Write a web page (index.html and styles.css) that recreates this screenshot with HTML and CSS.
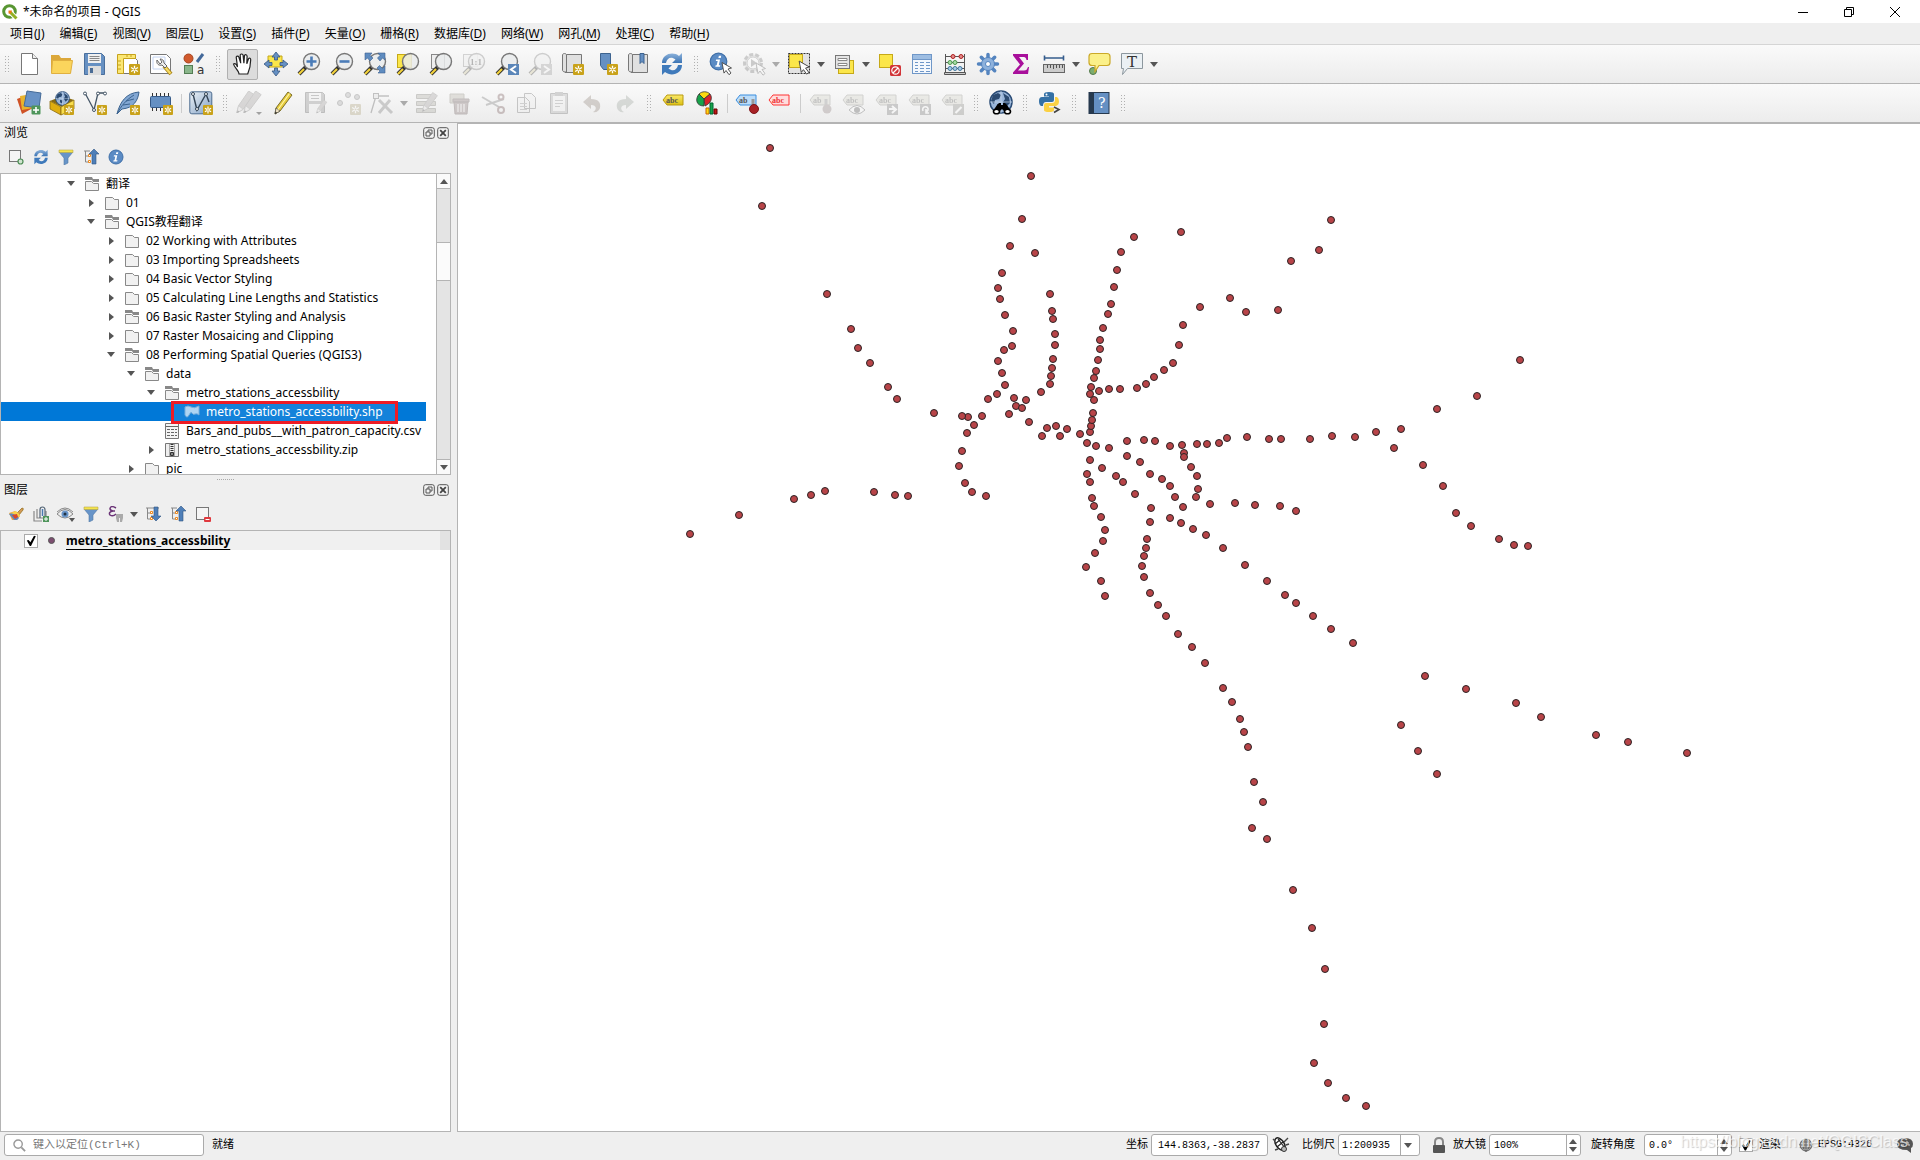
FILE: index.html
```html
<!DOCTYPE html>
<html lang="zh-CN">
<head>
<meta charset="utf-8">
<title>*未命名的项目 - QGIS</title>
<link rel="stylesheet" href="styles.css">
</head>
<body>
<svg class="sprite" aria-hidden="true">
  <defs>
    <linearGradient id="g-blue" x1="0" y1="0" x2="0" y2="1"><stop offset="0" stop-color="#8fb4dc"/><stop offset="1" stop-color="#3b74b4"/></linearGradient>
    <linearGradient id="g-vec" x1="0" y1="0" x2="1" y2="1"><stop offset="0" stop-color="#eef3f8"/><stop offset="1" stop-color="#7f9fc4"/></linearGradient>
    <linearGradient id="g-yellow" x1="0" y1="0" x2="0" y2="1"><stop offset="0" stop-color="#fbe96a"/><stop offset="1" stop-color="#dcc012"/></linearGradient>
    <marker id="station" markerUnits="userSpaceOnUse" markerWidth="10" markerHeight="10" refX="5" refY="5"><circle cx="5" cy="5" r="3.5" fill="#b84448" stroke="#2b2324"/></marker>
  </defs>
  <symbol id="star" viewBox="0 0 10 10"><rect width="10" height="10" rx="1" fill="#c9a21a"/><path d="M5 1.500v7M1.900 3.200l6.200 3.600M8.100 3.200 1.900 6.800" stroke="#fff" stroke-width="1.200"/><circle cx="5" cy="5" r=".8" fill="#c9a21a"/></symbol>
  <symbol id="cursor" viewBox="0 0 12 14"><path d="M1 1l9.500 5.500-3.500 1 3 4-2 1.700-3-4.200-2 2.600z" fill="#fff" stroke="#444" stroke-width=".9"/></symbol>
  <symbol id="glass" viewBox="0 0 24 24"><path d="M2 22l7-7" stroke="#333" stroke-width="4"/><path d="M2 22l5-5" stroke="#f3d23b" stroke-width="2.200"/><circle cx="14.500" cy="9.500" r="8" fill="#e9ebec" fill-opacity=".85" stroke="#777" stroke-width="1.400"/></symbol>
  <symbol id="label" viewBox="0 0 22 12"><path d="M1 6l4-5h16v10H5z"/></symbol>
  <symbol id="pencil" viewBox="0 0 24 24"><path d="M17 1l4 3L9 20l-5 3 1-6z" fill="#e6cb3c" stroke="#7b6d28"/><path d="M5 17l4 3-5 3z" fill="#efe2c4" stroke="#555" stroke-width=".7"/><path d="M4 23l.5-2.500 1.500 1.200z" fill="#222"/><path d="M18.500 2.500L7 18.500" stroke="#fff7a8" stroke-width="1.200"/></symbol>
  <symbol id="pencil-gray" viewBox="0 0 24 24"><path d="M16 0l6 4L10 20l-7 4 2-8z" fill="#a59a94" stroke="#7d7470"/><path d="M5 16l5 4-7 4z" fill="#e4e0dc" stroke="#777" stroke-width=".7"/><path d="M3 24l1-3 2 1.500z" fill="#333"/></symbol>
  <symbol id="refresh" viewBox="0 0 24 24"><path d="M2 11C2 2 13-1 19 4l3-3v10H12l3.500-3.500C11 4 7 6 6 11z" fill="url(#g-blue)"/><path d="M22 13c0 9-11 12-17 7l-3 3V13h10l-3.500 3.500C13 20 17 18 18 13z" fill="#3f7abb"/></symbol>
  <symbol id="folder" viewBox="0 0 16 16"><path d="M1.500 2.500h7l2 2h4v10h-13z" fill="#f1f1f1" stroke="#888"/></symbol>
  <symbol id="folder-open" viewBox="0 0 16 16"><path d="M1 1h7l1 2h6v3H9L8 4H1z" fill="#888"/><path d="M1.500 5.500h6l2 2h5v7h-13z" fill="#f1f1f1" stroke="#888"/></symbol>
  <symbol id="down" viewBox="0 0 8 5"><path d="M0 0h8L4 5z"/></symbol>
  <symbol id="right" viewBox="0 0 5 8"><path d="M0 0v8l5-4z"/></symbol>
  <symbol id="globe" viewBox="0 0 24 24"><circle cx="12" cy="12" r="11" fill="#9ab6da" stroke="#294b75" stroke-width="1.500"/><path d="M4 5l5-2 3 2-2 4-4 1-1 4-3-3zM14 3l6 4 1 6-4 4-3-5 2-3zM8 14l4 1-1 5-3-2z" fill="#2b4a70"/><path d="M1 12h22M12 1v22" stroke="#c9d8ea" stroke-width=".7"/></symbol>
  <symbol id="funnel" viewBox="0 0 16 16"><path d="M1 3h14l-5 6v5l-4 2V9z" fill="#6794c8" stroke="#5279a6" stroke-width=".6"/><path d="M1 1h14v2.500H1z" fill="#f5e44c" stroke="#b8aa4b" stroke-width=".6"/></symbol>
  <symbol id="float" viewBox="0 0 12 12"><rect x=".7" y=".7" width="10.600" height="10.600" rx="2" fill="#f3f3f3" stroke="#555"/><path d="M5 5V3h4v4H7M3 5h4v4H3z" fill="none" stroke="#555"/></symbol>
  <symbol id="close" viewBox="0 0 12 12"><rect x=".7" y=".7" width="10.600" height="10.600" rx="2" fill="#f3f3f3" stroke="#555"/><path d="M3.200 3.200l5.600 5.600M8.800 3.200L3.200 8.800" stroke="#444" stroke-width="1.800"/></symbol>
  <symbol id="info" viewBox="0 0 16 16"><circle cx="8" cy="8" r="7" fill="#5b8bc4" stroke="#3f6fa8"/><path d="M8.300 3.200h2l-.4 1.800h-2zM6 6.300h3.300L8.200 11.200h1.300l-.3 1.200H5.300l.3-1.200h.9l.8-3.700H5.700z" fill="#fff"/></symbol>
</svg>

<header class="titlebar">
  <svg class="logo" viewBox="0 0 16 16"><circle cx="7.500" cy="7.500" r="5.800" fill="none" stroke="#589632" stroke-width="3"/><path d="M8 8l6.500 6.500" stroke="#fff" stroke-width="5"/><path d="M8 8l6.500 6.500" stroke="#93b023" stroke-width="3"/><path d="M6.500 6.500h3.500l-1 3h-2.500z" fill="#ee7913"/></svg>
  <h1 class="title">*未命名的项目 - QGIS</h1>
  <div class="window-buttons">
    <button aria-label="最小化"><svg width="10" height="10"><path d="M0 5.500h10" stroke="#000"/></svg></button>
    <button aria-label="还原"><svg width="10" height="10" fill="none" stroke="#000"><path d="M.5 2.500h7v7h-7zM2.500 2.500v-2h7v7h-2"/></svg></button>
    <button aria-label="关闭"><svg width="10" height="10" stroke="#000"><path d="M0 0l10 10M10 0L0 10"/></svg></button>
  </div>
</header>

<nav class="menubar">
  <button>项目(<u>J</u>)</button><button>编辑(<u>E</u>)</button><button>视图(<u>V</u>)</button><button>图层(<u>L</u>)</button><button>设置(<u>S</u>)</button><button>插件(<u>P</u>)</button><button>矢量(<u>O</u>)</button><button>栅格(<u>R</u>)</button><button>数据库(<u>D</u>)</button><button>网络(<u>W</u>)</button><button>网孔(<u>M</u>)</button><button>处理(<u>C</u>)</button><button>帮助(<u>H</u>)</button>
</nav>

<div class="toolbar">
  <span class="handle first"></span>
  <button aria-label="新建项目"><svg viewBox="0 0 24 24"><path d="M4.500 1.500h11l5 5v16h-16z" fill="#fff" stroke="#777"/><path d="M15.500 1.500v5h5" fill="#eee" stroke="#777"/></svg></button>
  <button aria-label="打开项目"><svg viewBox="0 0 24 24"><path d="M1 3h8l2 3h10v15H1z" fill="#dca83a"/><path d="M2.500 8.500h20l-2 13h-19z" fill="#fbd55c" stroke="#e0b040"/></svg></button>
  <button aria-label="保存项目"><svg viewBox="0 0 24 24"><path d="M1.500 1.500h17l3 3v18h-20z" fill="#6690c2" stroke="#4a6f9c"/><rect x="5" y="2" width="13" height="9" fill="#f0f0f0"/><path d="M6.500 4.500h10M6.500 6.500h10M6.500 8.500h10" stroke="#888"/><rect x="5" y="14" width="13" height="9" fill="#ddd"/><rect x="7" y="16" width="3" height="5" fill="#4b6c95"/></svg></button>
  <button aria-label="新建打印布局"><svg viewBox="0 0 24 24"><path d="M3.500 3.500h13l5 5v13h-18z" fill="#fff" stroke="#777"/><path d="M1.500 21.500v-19h18v4h-12v15z" fill="#fbe774" stroke="#c6a21c"/><path d="M2 9h3M2 13h3M2 17h3M11 3v2M15 3v2" stroke="#c6a21c"/><use href="#star" x="13" y="12" width="11" height="11"/></svg></button>
  <button aria-label="布局管理器"><svg viewBox="0 0 24 24"><path d="M1.500 2.500h16l4 4v15h-20z" fill="#fff" stroke="#777"/><path d="M4 5h12v12H4z" fill="none" stroke="#c4d4f2"/><path d="M15 14l7 8" stroke="#a98519" stroke-width="4"/><path d="M15 14l6.500 7.500" stroke="#f7db61" stroke-width="2.200"/><path d="M8 8c-1 4 2 6 5 5l3 3 2-2-3-3c0-3-2-4-4-4l2 3-2 2z" fill="#eee" stroke="#666"/></svg></button>
  <button aria-label="样式管理器"><svg viewBox="0 0 24 24"><circle cx="6.500" cy="6.500" r="4.500" fill="#d25a2d" stroke="#a5451f"/><path d="M15 10l6-8" stroke="#44699a" stroke-width="3"/><rect x="2.500" y="13.500" width="8" height="8" fill="#8ab68b" stroke="#537d54"/><text x="15" y="22" class="glyph-a">a</text></svg></button>
  <span class="handle"></span>
  <button aria-label="平移地图" class="active"><svg viewBox="0 0 24 24"><path d="M8 22c0-3-5-7-5.500-10 1.500-1 3 0 4 3L5.200 5c.8-1.500 2.500-1 2.800.5l1.700 5.700L9.200 3c.8-1.500 2.500-1.200 2.900.2l.8 7.900.6-7.700c1-1.200 2.400-.7 2.600.9l-.3 7.400 1.700-5c1-1 2.200-.4 2.200 1 0 6-1 9.300-3 14.300z" fill="#fff" stroke="#222" stroke-width="1.200"/></svg></button>
  <button aria-label="平移到所选"><svg viewBox="0 0 24 24"><path d="M4 4h14v11H4z" fill="#fbe64a" stroke="#c6a918"/><path d="M12 0l4 5h-2.500v3h-3V5H8zM12 24l4-5h-2.500v-3h-3v3H8zM0 12l5-4v2.500h3v3H5V16zM24 12l-5-4v2.500h-3v3h3V16z" fill="#6590c3" stroke="#37577f" stroke-width=".8"/></svg></button>
  <button aria-label="放大"><svg viewBox="0 0 24 24"><use href="#glass"/><path d="M14.500 4.500v10M9.500 9.500h10" stroke="#4b7cb8" stroke-width="2.600"/></svg></button>
  <button aria-label="缩小"><svg viewBox="0 0 24 24"><use href="#glass"/><path d="M9.500 9.500h10" stroke="#4b7cb8" stroke-width="2.600"/></svg></button>
  <button aria-label="全图显示"><svg viewBox="0 0 24 24"><use href="#glass"/><path d="M2 1h7L7 3.500 10 6 7 9 4.500 6 2 8zM22 1h-7l2 2.500L14.500 6l2.500 3 2.500-3L22 8zM22 21h-7l2-2-3-3 2.500-2.500 3 3L22 14z" fill="#5f8cc0" stroke="#3c608e" stroke-width=".6"/></svg></button>
  <button aria-label="缩放到选择区域"><svg viewBox="0 0 24 24"><rect x="1.500" y="2.500" width="14" height="13" fill="#fbe64a" stroke="#c6a918"/><use href="#glass"/></svg></button>
  <button aria-label="缩放到图层"><svg viewBox="0 0 24 24"><rect x="2.500" y="2.500" width="13" height="14" fill="#eee" stroke="#888"/><use href="#glass"/></svg></button>
  <button aria-label="缩放到原始分辨率" disabled><svg viewBox="0 0 24 24"><rect x="1.500" y="2.500" width="14" height="12" fill="#eee" stroke="#888"/><use href="#glass"/><text x="8" y="13" class="glyph-ratio">1:1</text></svg></button>
  <button aria-label="上一视图"><svg viewBox="0 0 24 24"><use href="#glass"/><rect x="13" y="12" width="11" height="11" fill="#5b86b9"/><path d="M21 14l-5 3.500 5 3.500" fill="none" stroke="#fff" stroke-width="2"/></svg></button>
  <button aria-label="下一视图" disabled><svg viewBox="0 0 24 24"><use href="#glass"/><rect x="13" y="12" width="11" height="11" fill="#999"/><path d="M16 14l5 3.500-5 3.500" fill="none" stroke="#fff" stroke-width="2"/></svg></button>
  <button aria-label="新建地图视图"><svg viewBox="0 0 24 24"><path d="M1.500 3c0-2 4-2 4 0v17H4c-1.500 0-2.500-1-2.500-2zM5.500 2.500h15v18H4" fill="#e0e0e0" stroke="#777"/><use href="#star" x="12" y="12" width="11" height="11"/></svg></button>
  <button aria-label="新建空间书签"><svg viewBox="0 0 24 24"><path d="M6.500 1.500h10v20l-3-4h-4l-3-4z" fill="#6590c3" stroke="#3d638f"/><use href="#star" x="13" y="12" width="11" height="11"/></svg></button>
  <button aria-label="显示空间书签"><svg viewBox="0 0 24 24"><path d="M1.500 3c0-2 4-2 4 0v17H4c-1.500 0-2.500-1-2.500-2zM5.500 2.500h15v18H4" fill="#e0e0e0" stroke="#777"/><path d="M13 1.500h4v10l-2-2-2 2z" fill="#6590c3" stroke="#3d638f"/></svg></button>
  <button aria-label="刷新"><svg viewBox="0 0 24 24"><use href="#refresh"/></svg></button>
  <span class="handle"></span>
  <button aria-label="识别要素"><svg viewBox="0 0 24 24"><use href="#info" x="0" y="0" width="19" height="19"/><use href="#cursor" x="12" y="9" width="12" height="15"/></svg></button>
  <button aria-label="运行要素动作" disabled><svg viewBox="0 0 24 24"><circle cx="11" cy="11" r="8.500" fill="#ccc" stroke="#777" stroke-width="3" stroke-dasharray="4 2"/><circle cx="11" cy="11" r="6" fill="#fff" stroke="#888"/><path d="M9 7l6 4-6 4z" fill="#777"/><use href="#cursor" x="13" y="10" width="12" height="14"/></svg></button>
  <button class="drop muted" aria-label="动作选项"><svg viewBox="0 0 8 5"><use href="#down"/></svg></button>
  <button aria-label="选择要素"><svg viewBox="0 0 24 24"><rect x="1.500" y="1.500" width="21" height="20" fill="#e3e3e3" stroke="#333" stroke-dasharray="2 1"/><rect x="2.500" y="2.500" width="13" height="13" fill="#fbe64a" stroke="#c6a918"/><use href="#cursor" x="11" y="8" width="13" height="15"/></svg></button>
  <button class="drop" aria-label="选择选项"><svg viewBox="0 0 8 5"><use href="#down"/></svg></button>
  <button aria-label="按值选择要素"><svg viewBox="0 0 24 24"><rect x="6.500" y="8.500" width="15" height="13" fill="#fbe64a" stroke="#c6a918"/><rect x="3.500" y="3.500" width="14" height="13" fill="#e4e4e4" stroke="#777"/><path d="M6 6.500h9v2H6zM6 11.500h9v2H6z" fill="#fff" stroke="#888"/></svg></button>
  <button class="drop" aria-label="按值选择选项"><svg viewBox="0 0 8 5"><use href="#down"/></svg></button>
  <button aria-label="取消选择"><svg viewBox="0 0 24 24"><rect x="2.500" y="2.500" width="13" height="13" fill="#fbe64a" stroke="#c6a918"/><rect x="13" y="13" width="11" height="11" rx="1.500" fill="#d13438"/><circle cx="18.500" cy="18.500" r="3.700" fill="none" stroke="#fff" stroke-width="1.200"/><path d="M16 21l5-5" stroke="#fff" stroke-width="1.200"/></svg></button>
  <button aria-label="打开属性表"><svg viewBox="0 0 24 24"><rect x="2.500" y="2.500" width="19" height="19" fill="#f4f8fd" stroke="#6f97c8"/><path d="M3 3h18v4H3z" fill="#9dbde2"/><path d="M3 7.500h18M5 10.500h3M10 10.500h4M16 10.500h4M5 13.500h3M10 13.500h4M16 13.500h4M5 16.500h3M10 16.500h4M16 16.500h4M5 19.500h3M10 19.500h4M16 19.500h4" stroke="#6f97c8"/></svg></button>
  <button aria-label="字段计算器"><svg viewBox="0 0 24 24"><path d="M2.500 2v20M21.500 2v20M2 4.500h20M2 10.500h20M2 16.500h20" stroke="#555" fill="none"/><path d="M1.500 20.500h21v2h-21z" fill="#ccc" stroke="#555"/><g fill="#e38b8b" stroke="#b02020"><circle cx="10" cy="4.500" r="2"/><circle cx="18" cy="4.500" r="2"/></g><g fill="#a8dba8" stroke="#4e9a4e"><circle cx="7" cy="10.500" r="2"/><circle cx="12" cy="10.500" r="2"/></g><g fill="#a6cbe8" stroke="#44799f"><circle cx="7" cy="16.500" r="2"/><circle cx="12" cy="16.500" r="2"/><circle cx="17" cy="16.500" r="2"/></g></svg></button>
  <button aria-label="工具箱"><svg viewBox="0 0 24 24"><g stroke="#5484bf" stroke-width="3.500" stroke-linecap="round"><path d="M12 2.500v19M2.500 12h19M5.300 5.300l13.400 13.400M18.700 5.300L5.300 18.700"/></g><circle cx="12" cy="12" r="6.500" fill="#8db1dc" stroke="#5484bf"/><circle cx="12" cy="12" r="2.500" fill="#fff" stroke="#5484bf"/></svg></button>
  <button aria-label="统计摘要"><svg viewBox="0 0 24 24"><path d="M4 2h15v6h-1.500c-.5-2.500-1.500-3-4-3H10l5 6.500-6 7h6c2.500 0 3-1 4-3.500h1L19 22H4v-1.500l7-8L4 3.500z" fill="#a8109b"/></svg></button>
  <button aria-label="测量"><svg viewBox="0 0 24 24"><path d="M2 6h20M2.500 3.500v5M21.500 3.500v5" stroke="#365d8d" stroke-width="1.600"/><rect x="1.500" y="12.500" width="21" height="8" fill="#ccc" stroke="#666"/><path d="M5.500 13v3M8.500 13v3M11.500 13v4M14.500 13v3M17.500 13v3M20.500 13v3" stroke="#555"/></svg></button>
  <button class="drop" aria-label="测量选项"><svg viewBox="0 0 8 5"><use href="#down"/></svg></button>
  <button aria-label="地图提示"><svg viewBox="0 0 24 24"><circle cx="6" cy="19" r="3.500" fill="#7bad70" stroke="#547a4c"/><path d="M5 1.500h15q3 0 3 3v6q0 3-3 3h-8l-4 6v-6H5q-3 0-3-3v-6q0-3 3-3z" fill="#fbf089" stroke="#cba928" stroke-width="1.200"/></svg></button>
  <button aria-label="文本注记"><svg viewBox="0 0 24 24"><path d="M1.500 1.500h21v15h-15l-5 6 1-6h-2z" fill="#eaf0f4" stroke="#8c979e"/><text x="7" y="14.500" class="glyph-t">T</text></svg></button>
  <button class="drop" aria-label="注记选项"><svg viewBox="0 0 8 5"><use href="#down"/></svg></button>
</div>

<div class="toolbar">
  <span class="handle first"></span>
  <button aria-label="数据源管理器"><svg viewBox="0 0 24 24"><path d="M0 8l10-4 6 13-11 6z" fill="#cf5327"/><path d="M3 5l12-2 1 14-11 2z" fill="#e8b32c"/><path d="M10 0l14 2-2 15-15-2z" fill="#6892c5" stroke="#456b98"/><rect x="14.500" y="14.500" width="9" height="9" rx="1" fill="#4e955b"/><path d="M19 16v6M16 19h6" stroke="#fff" stroke-width="1.600"/></svg></button>
  <button aria-label="新建 GeoPackage 图层"><svg viewBox="0 0 24 24"><path d="M0 10l12-5 12 4-12 7z" fill="#8b6d11"/><use href="#globe" x="5" y="0" width="15" height="15"/><path d="M0 10l11 6v8L0 18z" fill="#dfae10" stroke="#8a6c12" stroke-width=".8"/><path d="M11 16l13-7v9l-13 6z" fill="#f9de4d" stroke="#8a6c12" stroke-width=".8"/><use href="#star" x="14" y="14" width="10" height="10"/></svg></button>
  <button aria-label="新建 Shapefile 图层"><svg viewBox="0 0 24 24"><path d="M2 2l9 17 4-17h6" fill="none" stroke="#456" stroke-width="1.300"/><g fill="#fff" stroke="#456"><circle cx="2" cy="2.500" r="1.500"/><circle cx="11" cy="19" r="1.500"/><circle cx="15" cy="2.500" r="1.500"/><circle cx="22" cy="2.500" r="1.500"/></g><use href="#star" x="14" y="14" width="10" height="10"/></svg></button>
  <button aria-label="新建 SpatiaLite 图层"><svg viewBox="0 0 24 24"><path d="M1 23c3-12 9-21 22-22-1 8-5 16-17 17z" fill="#82a7d3" stroke="#3b638f"/><path d="M1 23C5 15 10 9 18 4M7 14l7-1M10 10l8-2" stroke="#3b638f" fill="none"/><use href="#star" x="14" y="14" width="10" height="10"/></svg></button>
  <button aria-label="新建临时图层"><svg viewBox="0 0 24 24"><path d="M3.500 2v18M7.500 2v18M11.500 2v18M15.500 2v18M19.500 2v18" stroke="#333"/><rect x="1.500" y="5.500" width="20" height="11" rx="1" fill="#6590c3" stroke="#375b88"/><use href="#star" x="14" y="14" width="10" height="10"/></svg></button>
  <span class="sep"></span>
  <button aria-label="新建虚拟图层"><svg viewBox="0 0 24 24"><rect x=".8" y=".8" width="22" height="22" rx="2" fill="url(#g-vec)" stroke="#4c6b8f"/><path d="M4 3l4 16 9-16M17 3l3 8" fill="none" stroke="#345" stroke-width="1.400"/><g fill="#fff" stroke="#345"><circle cx="4" cy="3" r="1.500"/><circle cx="8" cy="18" r="1.500"/><circle cx="17" cy="3" r="1.500"/></g><use href="#star" x="14" y="14" width="10" height="10"/></svg></button>
  <span class="handle"></span>
  <button aria-label="当前编辑" disabled><svg viewBox="0 0 24 24"><use href="#pencil-gray" x="-4" y="0" width="22" height="22"/><use href="#pencil-gray" x="3" y="0" width="22" height="22"/><path d="M18 21h6l-3 3z"/></svg></button>
  <button aria-label="切换编辑"><svg viewBox="0 0 24 24"><use href="#pencil"/></svg></button>
  <button aria-label="保存图层编辑" disabled><svg viewBox="0 0 24 24"><path d="M1.500 1.500h17l2 2v18h-19z" fill="#888" stroke="#555"/><path d="M5 2h12v8H5zM5 13h12v9H5z" fill="#eee"/><path d="M7 4.500h8M7 7.500h8" stroke="#666"/><use href="#pencil-gray" x="11" y="8" width="13" height="15"/></svg></button>
  <button aria-label="添加点要素" disabled><svg viewBox="0 0 24 24"><g fill="#aaa" stroke="#666"><circle cx="11" cy="4" r="2.500"/><circle cx="3" cy="12" r="2.500"/><circle cx="20" cy="6" r="2.500"/></g><use href="#star" x="13" y="13" width="11" height="11"/></svg></button>
  <button aria-label="顶点工具" disabled><svg viewBox="0 0 24 24"><path d="M1 22L6 5h13" fill="none" stroke="#555" stroke-width="1.300"/><rect x="3.500" y="2.500" width="5" height="5" fill="#ddd" stroke="#555"/><path d="M9 9l13 13M20 9L9 22" stroke="#777" stroke-width="3"/></svg></button>
  <button class="drop muted" aria-label="顶点工具选项"><svg viewBox="0 0 8 5"><use href="#down"/></svg></button>
  <button aria-label="修改属性" disabled><svg viewBox="0 0 24 24"><path d="M1.500 3.500h19v4h-19zM1.500 10.500h19v4h-19zM1.500 17.500h19v4h-19z" fill="#aca98a" stroke="#77745c"/><use href="#pencil-gray" x="5" y="0" width="19" height="22"/></svg></button>
  <button aria-label="删除所选" disabled><svg viewBox="0 0 24 24"><path d="M2 3h14v9H2z" fill="#bbb083" stroke="#877b55"/><path d="M5 8h16v3H5zM6 11h14l-1 12H7z" fill="#a36868" stroke="#744"/><path d="M10 13v8M13 13v8M16 13v8" stroke="#fff"/></svg></button>
  <button aria-label="剪切要素" disabled><svg viewBox="0 0 24 24"><path d="M1 6l17 10M23 8L5 14" stroke="#777" stroke-width="2"/><circle cx="20" cy="19" r="3" fill="none" stroke="#a44" stroke-width="2"/><circle cx="20" cy="6" r="2.500" fill="none" stroke="#a44" stroke-width="2"/></svg></button>
  <button aria-label="复制要素" disabled><svg viewBox="0 0 24 24"><path d="M10.500 2.500h7l4 4v11h-11zM3.500 6.500h8l4 4v11h-12z" fill="#eee" stroke="#666"/><path d="M6 12.500h7M6 15.500h7M6 18.500h7" stroke="#888"/></svg></button>
  <button aria-label="粘贴要素" disabled><svg viewBox="0 0 24 24"><path d="M3.500 2.500h17v20h-17z" fill="#aaa" stroke="#666"/><path d="M6 5h12v15H6z" fill="#eee"/><path d="M8 1h8v4H8z" fill="#888"/><path d="M8 9.500h8M8 12.500h8M8 15.500h5" stroke="#888"/></svg></button>
  <button aria-label="撤销" disabled><svg viewBox="0 0 24 24"><path d="M3 11l8-7v4c8 0 10 4 9 9-1 3-4 5-7 4 4-2 4-7-2-7v4z" fill="#a67c58"/></svg></button>
  <button aria-label="重做" disabled><svg viewBox="0 0 24 24"><path d="M21 11l-8-7v4c-8 0-10 4-9 9 1 3 4 5 7 4-4-2-4-7 2-7v4z" fill="#8aa68a"/></svg></button>
  <span class="handle"></span>
  <button aria-label="图层标注选项"><svg viewBox="0 0 24 24"><use href="#label" x="0" y="3" width="22" height="12" fill="url(#g-yellow)" stroke="#b89a10"/><text x="4" y="12" class="glyph-abc">abc</text></svg></button>
  <button aria-label="图层图表选项"><svg viewBox="0 0 24 24"><path d="M9 8L4 3c3-3 8-3 11 0z" fill="#fbd90f" stroke="#333" stroke-width=".8"/><path d="M9 8l6-5c3 4 1 9-5 12z" fill="#d8232a" stroke="#333" stroke-width=".8"/><path d="M9 8L4 3c-4 5-3 12 5 12z" fill="#17a34a" stroke="#333" stroke-width=".8"/><path d="M11 17h3v6h-3z" fill="#fbd90f" stroke="#c60"/><path d="M15 12h3v11h-3z" fill="#17a34a" stroke="#063"/><path d="M19 18h3v5h-3z" fill="#c01717" stroke="#600"/></svg></button>
  <span class="sep"></span>
  <button aria-label="高亮固定标注"><svg viewBox="0 0 24 24"><use href="#label" x="0" y="3" width="22" height="12" fill="#bcdcf8" stroke="#3b8ede"/><text x="4" y="12" class="glyph-abc">ab</text><path d="M18 8v8" stroke="#999" stroke-width="3"/><circle cx="19" cy="18" r="4.500" fill="#a82226" stroke="#7d1519"/></svg></button>
  <button aria-label="显示未放置标注"><svg viewBox="0 0 24 24"><use href="#label" x="0" y="3" width="22" height="12" fill="#fdd" stroke="#f33"/><text x="4" y="12" class="glyph-abc red">abc</text></svg></button>
  <span class="sep"></span>
  <button aria-label="固定标注" disabled><svg viewBox="0 0 24 24"><use href="#label" x="1" y="3" width="22" height="12" fill="#d5d3aa" stroke="#887"/><text x="5" y="12" class="glyph-abc">ab</text><path d="M18 8v8" stroke="#888" stroke-width="3"/><circle cx="19" cy="18" r="4.500" fill="#a77"/></svg></button>
  <button aria-label="显示隐藏标注" disabled><svg viewBox="0 0 24 24"><use href="#label" x="1" y="3" width="22" height="12" fill="#d5d3aa" stroke="#887"/><text x="5" y="12" class="glyph-abc">abc</text><path d="M8 19q8-9 16 0-8 8-16 0z" fill="#fff" stroke="#555"/><circle cx="16" cy="19" r="3" fill="#555"/></svg></button>
  <button aria-label="移动标注" disabled><svg viewBox="0 0 24 24"><use href="#label" x="1" y="3" width="22" height="12" fill="#d5d3aa" stroke="#887"/><text x="5" y="12" class="glyph-abc">abc</text><rect x="13" y="13" width="11" height="11" fill="#777"/><path d="M15 18h6M18 15l4 3.500-4 3.500" fill="none" stroke="#fff" stroke-width="2"/></svg></button>
  <button aria-label="旋转标注" disabled><svg viewBox="0 0 24 24"><use href="#label" x="1" y="3" width="22" height="12" fill="#d5d3aa" stroke="#887"/><text x="5" y="12" class="glyph-abc">abc</text><rect x="13" y="13" width="11" height="11" fill="#777"/><path d="M16 20c-2-5 6-6 5-1l-2 3M19 18v4h3" fill="none" stroke="#fff" stroke-width="1.600"/></svg></button>
  <button aria-label="更改标注" disabled><svg viewBox="0 0 24 24"><use href="#label" x="1" y="3" width="22" height="12" fill="#d5d3aa" stroke="#887"/><text x="5" y="12" class="glyph-abc">abc</text><rect x="13" y="13" width="11" height="11" fill="#887"/><path d="M15.500 22l6-6" stroke="#fff" stroke-width="2.200"/></svg></button>
  <span class="handle"></span>
  <button aria-label="元数据搜索"><svg viewBox="0 0 24 24"><use href="#globe" x="0" y="-1" width="24" height="24"/><path d="M8 14l2-2h2v2h2v-2h2l2 2 4 6h-7l-2-2-2 2H4z" fill="#000"/><g fill="#fff" stroke="#000" stroke-width="1.600"><ellipse cx="7.500" cy="20.500" rx="3" ry="2.300"/><ellipse cx="18.500" cy="20.500" rx="3" ry="2.300"/></g></svg></button>
  <span class="handle"></span>
  <button aria-label="Python 控制台"><svg viewBox="0 0 24 24"><path d="M6 6V3q0-2 5-2t5 2v6q0 2-2 2H8q-3 0-3 4H3q-2-1-2-5t3-4h7V5.500H6z" fill="#3470a5"/><path d="M17 6h2q2 1 2 4.500T18 15h-7v1.500h5V19q0 2-5 2t-5-2v-5q0-2 2-2h6q3 0 3-3z" fill="#fbd144"/><circle cx="8.500" cy="3.500" r="1" fill="#fff"/><path d="M16 16l5 2.500-5 3" stroke="#444" stroke-width="1.600" fill="none"/></svg></button>
  <span class="handle"></span>
  <button aria-label="帮助"><svg viewBox="0 0 24 24"><rect x="2" y="1.500" width="20" height="21" fill="#6590c3" stroke="#26394e"/><path d="M2 1.500h5v21H2z" fill="#26394e"/><text x="11" y="17" class="glyph-help">?</text></svg></button>
  <span class="handle"></span>
</div>

<main class="workspace">
  <aside class="docks">
    <section class="dock browser">
      <header class="dock-title"><h2>浏览</h2><button aria-label="浮动浏览面板"><svg><use href="#float"/></svg></button><button aria-label="关闭浏览面板"><svg><use href="#close"/></svg></button></header>
      <div class="dock-tools">
        <button aria-label="添加所选图层"><svg viewBox="0 0 16 16"><rect x="1.500" y="1.500" width="11" height="11" fill="#f5f5f5" stroke="#777"/><circle cx="12.500" cy="12.500" r="2.500" fill="#cfe3cf" stroke="#4c8c54" stroke-width="1.200"/></svg></button>
        <button aria-label="刷新"><svg viewBox="0 0 24 24"><use href="#refresh"/></svg></button>
        <button aria-label="过滤"><svg viewBox="0 0 16 16"><use href="#funnel"/></svg></button>
        <button aria-label="全部折叠"><svg viewBox="0 0 16 16"><path d="M1 2h6M2.500 2v11H6M2.500 7H6" fill="none" stroke="#888"/><path d="M5.500 5.500h2v2h-2zM5.500 11.500h2v2h-2z" fill="#fff" stroke="#f08a1c"/><path d="M11 0l5 5h-3v10H9V5H6z" fill="#4f7fb8" stroke="#2f5482" stroke-width=".6"/></svg></button>
        <button aria-label="属性"><svg viewBox="0 0 16 16"><use href="#info"/></svg></button>
      </div>
      <div class="tree-box">
        <ul class="tree">
          <li class="d0"><svg class="arrow open"><use href="#down"/></svg><svg class="ico"><use href="#folder-open"/></svg>翻译</li>
          <li class="d1"><svg class="arrow"><use href="#right"/></svg><svg class="ico"><use href="#folder"/></svg>01</li>
          <li class="d1"><svg class="arrow open"><use href="#down"/></svg><svg class="ico"><use href="#folder-open"/></svg>QGIS教程翻译</li>
          <li class="d2"><svg class="arrow"><use href="#right"/></svg><svg class="ico"><use href="#folder"/></svg>02 Working with Attributes</li>
          <li class="d2"><svg class="arrow"><use href="#right"/></svg><svg class="ico"><use href="#folder"/></svg>03 Importing Spreadsheets</li>
          <li class="d2"><svg class="arrow"><use href="#right"/></svg><svg class="ico"><use href="#folder"/></svg>04 Basic Vector Styling</li>
          <li class="d2"><svg class="arrow"><use href="#right"/></svg><svg class="ico"><use href="#folder"/></svg>05 Calculating Line Lengths and Statistics</li>
          <li class="d2"><svg class="arrow"><use href="#right"/></svg><svg class="ico"><use href="#folder-open"/></svg>06 Basic Raster Styling and Analysis</li>
          <li class="d2"><svg class="arrow"><use href="#right"/></svg><svg class="ico"><use href="#folder"/></svg>07 Raster Mosaicing and Clipping</li>
          <li class="d2"><svg class="arrow open"><use href="#down"/></svg><svg class="ico"><use href="#folder-open"/></svg>08 Performing Spatial Queries (QGIS3)</li>
          <li class="d3"><svg class="arrow open"><use href="#down"/></svg><svg class="ico"><use href="#folder-open"/></svg>data</li>
          <li class="d4"><svg class="arrow open"><use href="#down"/></svg><svg class="ico"><use href="#folder-open"/></svg>metro_stations_accessbility</li>
          <li class="d5 selected"><span class="highlight"></span><svg class="arrow"></svg><svg class="ico" viewBox="0 0 16 16"><path d="M1 3q3-2 6 0t8-1v9q-2-2-4-1t-3-1-3 2-4 0z" fill="#a9d2f2" stroke="#6fa8d8"/></svg>metro_stations_accessbility.shp</li>
          <li class="d4"><svg class="arrow"></svg><svg class="ico" viewBox="0 0 16 16"><path d="M1.500.5h13v15h-13z" fill="#f4f4f4" stroke="#777"/><path d="M2 3.500h12M3 6.500h3M7 6.500h3M11 6.500h2M3 9.500h3M7 9.500h3M11 9.500h2M3 12.500h3M7 12.500h3M11 12.500h2" stroke="#666"/></svg>Bars_and_pubs__with_patron_capacity.csv</li>
          <li class="d4"><svg class="arrow"><use href="#right"/></svg><svg class="ico" viewBox="0 0 16 16"><path d="M1.500 1.500h13v13h-13z" fill="#eee" stroke="#777"/><path d="M5.500 2v12M10.500 2v12" stroke="#aaa"/><path d="M8 2v8" stroke="#333" stroke-width="3" stroke-dasharray="1 1"/><path d="M6.500 10.500h3v3h-3z" fill="#888" stroke="#333"/></svg>metro_stations_accessbility.zip</li>
          <li class="d3"><svg class="arrow"><use href="#right"/></svg><svg class="ico"><use href="#folder"/></svg>pic</li>
        </ul>
        <div class="scrollbar"><button aria-label="向上滚动"><svg viewBox="0 0 8 5"><path d="M0 5h8L4 0z"/></svg></button><span class="track"><span class="thumb"></span></span><button aria-label="向下滚动"><svg viewBox="0 0 8 5"><use href="#down"/></svg></button></div>
      </div>
    </section>
    <div class="splitter"></div>
    <section class="dock layers">
      <header class="dock-title"><h2>图层</h2><button aria-label="浮动图层面板"><svg><use href="#float"/></svg></button><button aria-label="关闭图层面板"><svg><use href="#close"/></svg></button></header>
      <div class="dock-tools">
        <button aria-label="打开图层样式面板"><svg viewBox="0 0 16 16"><path d="M9 7l5-5q2 0 1 2l-4 5z" fill="#d39a55" stroke="#8f6b19" stroke-width=".7"/><path d="M1 7l6-2 5 5-3 4H4z" fill="#f2a944"/><path d="M1 8l4-1 6 5-2 2H6z" fill="#5c8ac0"/><path d="M3 7l5-2 4 4-1 2-3-2z" fill="#f6d24a"/><path d="M4 9l5-1 1 3-3 2z" fill="#d9482b"/></svg></button>
        <button aria-label="添加组"><svg viewBox="0 0 16 16"><path d="M1 5v10h8M4 3v9h9V5" fill="none" stroke="#888" stroke-width="1.200"/><path d="M7 12V4q0-3 2.500-3T12 4v7" fill="none" stroke="#567" stroke-width="1.200"/><path d="M9.500 3v7" stroke="#4a7ab0" stroke-width="1.500"/><rect x="10" y="10" width="6" height="6" fill="#4e955b"/><path d="M13 11v4M11 13h4" stroke="#fff"/></svg></button>
        <button aria-label="管理地图主题"><svg class="wide" viewBox="0 0 18 16"><path d="M0 8q8-9 16 0-8 8-16 0z" fill="#eee" stroke="#888"/><path d="M0 6q8-8 16 0" fill="none" stroke="#888"/><circle cx="8" cy="8" r="3.500" fill="#6894c9"/><circle cx="8" cy="8" r="1.500" fill="#234"/><path d="M12 12h6l-3 4z" fill="#555"/></svg></button>
        <button aria-label="过滤图例"><svg viewBox="0 0 16 16"><use href="#funnel"/></svg></button>
        <button aria-label="按表达式过滤"><svg viewBox="0 0 16 16"><path d="M8 2Q3-1 2 2.500q0 2 3 2.500Q0 6 2 9q3 2 6-1M4 5h3" fill="none" stroke="#6b3477" stroke-width="1.500"/><path d="M8 8h7v4l-1 4h-2v-4h-1v4H9l-1-4z" fill="#aaa"/></svg></button>
        <button class="drop" aria-label="过滤选项"><svg viewBox="0 0 8 5"><use href="#down"/></svg></button>
        <button aria-label="全部展开"><svg viewBox="0 0 16 16"><path d="M1 2h13M2.500 2v11H6M2.500 7H6" fill="none" stroke="#888"/><path d="M5.500 5.500h2v2h-2zM5.500 11.500h2v2h-2z" fill="#fff" stroke="#f08a1c"/><path d="M11 15l5-5h-3V1H9v9H6z" fill="#4f7fb8" stroke="#2f5482" stroke-width=".6"/></svg></button>
        <button aria-label="全部折叠"><svg viewBox="0 0 16 16"><path d="M1 2h6M2.500 2v11H6M2.500 7H6" fill="none" stroke="#888"/><path d="M5.500 5.500h2v2h-2zM5.500 11.500h2v2h-2z" fill="#fff" stroke="#f08a1c"/><path d="M11 0l5 5h-3v10H9V5H6z" fill="#4f7fb8" stroke="#2f5482" stroke-width=".6"/></svg></button>
        <button aria-label="移除图层"><svg viewBox="0 0 16 16"><rect x="1.500" y="1.500" width="12" height="12" fill="#f5f5f5" stroke="#777"/><rect x="9" y="11" width="7" height="5" rx="1" fill="#e0393e"/><path d="M10.500 13.500h4" stroke="#fff"/></svg></button>
      </div>
      <div class="layer-box">
        <div class="layer-row"><input type="checkbox" id="layer-visible" checked><span class="symbol"></span><label for="layer-visible">metro_stations_accessbility</label></div>
      </div>
    </section>
  </aside>
  <section class="map" aria-label="地图画布">
    <svg><path class="stations" transform="translate(-458 -124)" d="M770 148L762 206L1031 176L827 294L851 329L858 348L870 363L888 387L897 399
      L1022 219L1010 246L1035 253L1002 273L998 288L1000 299L1005 315L1013 331L1012 346L1004 350L998 361L1002 373L1005 385L997 394L988 399L982 416L974 425L967 433L968 417L962 416L934 413
      L1014 398L1016 406L1022 408L1026 400L1009 414L1041 392L1050 384L1051 376L1052 368L1053 359L1055 345L1055 334L1053 319L1052 311L1050 294
      L1029 422L1042 436L1047 428L1056 426L1060 436L1067 429L1080 434L1087 443L1090 432L1091 426L1092 420L1093 413L1094 400L1090 394L1091 387L1094 378L1096 371L1098 360L1100 349L1100 340L1103 328L1108 314L1111 304L1114 287L1117 270L1121 252L1134 237L1181 232
      L1230 298L1246 312L1200 307L1183 325L1179 345L1173 363L1164 370L1154 377L1146 384L1137 388L1120 389L1109 389L1099 391
      L1096 446L1109 448L1127 441L1144 440L1155 441L1170 446L1182 445L1197 444L1207 444L1219 443L1227 438L1247 437L1269 439L1281 439L1310 439
      L962 451L959 466L965 483L972 492L986 496L1090 460L1087 474L1090 482L1092 498L1094 506L1101 517L1105 530L1103 541L1095 553L1086 567L1101 581L1105 596
      L1102 468L1116 476L1123 482L1135 494L1151 508L1150 522L1147 539L1146 548L1144 556L1142 566L1144 577L1150 593L1158 605L1166 616L1178 634L1192 647L1205 663
      L1127 456L1140 462L1150 474L1162 479L1170 486L1175 497L1183 507L1170 518L1181 523L1193 529L1206 535L1223 548L1245 565L1267 581L1285 595L1296 603L1313 616
      L1184 453L1184 457L1191 467L1197 476L1198 489L1196 497L1210 504L1235 503L1255 505L1280 506L1296 511
      L1331 220L1319 250L1291 261L1278 310L1520 360L1477 396L1437 409L1401 429L1376 432L1355 437L1332 436L1394 448L1423 465L1443 486L1456 513L1471 526L1499 539L1514 545L1528 546
      L794 499L811 495L825 491L874 492L895 495L908 496L739 515L690 534
      L1331 629L1353 643L1425 676L1466 689L1516 703L1541 717L1596 735L1628 742L1687 753L1401 725L1418 751L1437 774
      L1223 688L1232 702L1240 719L1244 732L1248 747L1254 782L1263 802L1252 828L1267 839L1293 890L1312 928L1325 969L1324 1024L1314 1063L1328 1083L1346 1098L1366 1106"/></svg>
  </section>
</main>

<footer class="statusbar">
  <div class="locator"><svg viewBox="0 0 14 14"><circle cx="5.500" cy="5.500" r="4.500" fill="none" stroke="#999" stroke-width="1.500"/><path d="M9 9l4 4" stroke="#999" stroke-width="2"/></svg><input type="text" placeholder="键入以定位(Ctrl+K)" aria-label="定位"></div>
  <span class="ready">就绪</span>
  <div class="status-right">
    <div class="field"><label for="coord">坐标</label><input id="coord" class="coord" type="text" value="144.8363,-38.2837"></div>
    <button class="extents" aria-label="切换范围显示"><svg viewBox="0 0 18 18"><ellipse cx="8" cy="8" rx="4" ry="7" transform="rotate(-35 8 8)" fill="#fff" stroke="#222" stroke-width="1.500"/><path d="M3 8l6-5M5 11l6-5M6 3l7 9" stroke="#222" stroke-width="1.200"/><circle cx="12" cy="13" r="2.500" fill="#bbb" stroke="#333"/><path d="M12 6l4-4M14 9l3-1M1 3l2 2M3 14l3-1" fill="none" stroke="#444" stroke-width="1.400"/></svg></button>
    <div class="field"><label for="scale">比例尺</label><span class="combo"><select id="scale"><option>1:200935</option></select><svg viewBox="0 0 8 5"><use href="#down"/></svg></span></div>
    <button class="lock" aria-label="锁定比例尺"><svg viewBox="0 0 14 16"><path d="M3 8V5q0-4 4-4t4 4v3" fill="none" stroke="#888" stroke-width="2"/><rect x="1" y="8" width="12" height="8" rx="1" fill="#555"/></svg></button>
    <div class="field"><label for="magnifier">放大镜</label><span class="spin"><input id="magnifier" type="text" value="100%"><span class="steps"><button aria-label="增大"><svg viewBox="0 0 8 5"><path d="M0 5h8L4 0z"/></svg></button><button aria-label="减小"><svg viewBox="0 0 8 5"><use href="#down"/></svg></button></span></span></div>
    <div class="field rotation"><label for="rotation">旋转角度</label><span class="spin"><input id="rotation" type="text" value="0.0°"><span class="steps"><button aria-label="顺时针"><svg viewBox="0 0 8 5"><path d="M0 5h8L4 0z"/></svg></button><button aria-label="逆时针"><svg viewBox="0 0 8 5"><use href="#down"/></svg></button></span></span></div>
    <div class="field render"><input type="checkbox" id="render" checked><label for="render">渲染</label></div>
    <button class="crs"><svg viewBox="0 0 14 14" fill="none" stroke="#666"><circle cx="7" cy="7" r="6" fill="#ccc"/><ellipse cx="7" cy="7" rx="3" ry="6"/><path d="M7 0v14M0 7h14M2 4h10M2 10h10"/></svg>EPSG:4326</button>
    <button class="messages" aria-label="消息"><svg viewBox="0 0 16 16"><path d="M8 1q8 0 8 6 0 3-2 4v5l-4-3Q0 13 0 7q0-6 8-6z" fill="#555"/><path d="M3 5h3M4 8h3M9 5h2v3h2" stroke="#ddd" fill="none"/></svg></button>
  </div>
  <span class="watermark">https://blog.csdn.net/QGISClass</span>
</footer>
</body>
</html>
```

FILE: styles.css
```css
* { box-sizing: border-box; }

html, body { height: 100%; }

body {
  margin: 0;
  display: flex;
  flex-direction: column;
  background: #efefef;
  color: #000;
  font: 12px/16px "Noto Sans", "Noto Sans CJK SC", sans-serif;
  overflow: hidden;
}

button {
  margin: 0;
  padding: 0;
  border: 0;
  background: none;
  color: inherit;
  font: inherit;
  display: flex;
  align-items: center;
  justify-content: center;
}

h1, h2 { margin: 0; font-size: 12px; font-weight: 400; }

.sprite { position: absolute; width: 0; height: 0; }

/* Title bar and menus */
.titlebar {
  flex: none;
  height: 23px;
  padding-right: 2px;
  display: flex;
  align-items: center;
  background: #fff;
}
.logo { width: 16px; height: 16px; margin: 0 5px 0 2px; }
.title { font-size: 12px; }
.window-buttons { margin-left: auto; display: flex; }
.window-buttons button { width: 46px; height: 20px; }

.menubar {
  flex: none;
  height: 22px;
  padding-left: 3px;
  display: flex;
  border-bottom: 1px solid #d5d5d5;
}
.menubar button { padding: 0 8px 0 7px; }
.menubar u { text-underline-offset: 2px; }

/* Toolbars */
.toolbar {
  flex: none;
  height: 39px;
  display: flex;
  align-items: center;
  background: linear-gradient(#fafafa, #ececec);
  border-bottom: 1px solid #b4b4b4;
}
.toolbar button { width: 33px; height: 31px; flex: none; }
.toolbar button svg { width: 24px; height: 24px; overflow: visible; }
.toolbar button:disabled svg { opacity: .32; filter: grayscale(.7); }
.toolbar button.active {
  width: 31px;
  margin: 0 1px;
  background: #dcdcdc;
  border: 1px solid #b0b0b0;
  border-radius: 2px;
}
.toolbar .drop, .dock-tools .drop { width: 12px; }
.toolbar .drop svg, .dock-tools .drop svg { width: 8px; height: 5px; fill: #555; }
.toolbar .drop.muted svg { fill: #aaa; }
.handle {
  flex: none;
  width: 16px;
  height: 17px;
  padding: 0 6px;
  background: repeating-linear-gradient(transparent 0 1px, #f3f3f3 1px 3px) content-box, repeating-linear-gradient(90deg, #b0b0b0 0 1px, transparent 1px 3px) content-box;
}
.handle.first { width: 12px; padding: 0 3px 0 5px; }
.sep { flex: none; width: 7px; height: 19px; padding-left: 4px; }
.sep::before { content: ""; display: block; width: 1px; height: 100%; background: #ccc; }

.glyph-a { font: 12px "DejaVu Sans", sans-serif; fill: #333; }
.glyph-ratio { font: bold 9px "Liberation Serif", serif; fill: #333; }
.glyph-t { font: 15px "DejaVu Serif", serif; fill: #333; }
.glyph-abc { font: bold 8px "Liberation Serif", serif; fill: #555; }
.glyph-abc.red { fill: #e33; }
.glyph-help { font: 14px "DejaVu Serif", serif; fill: #fff; }

/* Main area */
.workspace {
  flex: 1;
  min-height: 0;
  display: grid;
  grid-template-columns: 451px 1fr;
  column-gap: 6px;
}
.docks { min-height: 0; display: flex; flex-direction: column; }
.dock-title {
  height: 20px;
  display: flex;
  align-items: center;
  gap: 2px;
  padding: 0 2px 0 4px;
}
.dock-title h2 { flex: 1; }
.dock-title svg { display: block; width: 12px; height: 12px; }
.dock-tools { height: 30px; display: flex; align-items: center; padding: 0 0 2px 3px; }
.dock-tools button { width: 25px; height: 24px; }
.dock-tools svg { width: 16px; height: 16px; }
.dock-tools .wide { width: 18px; }
.browser { flex: none; }
.layers { flex: 1; min-height: 0; display: flex; flex-direction: column; }

.tree-box {
  height: 302px;
  display: flex;
  border: 1px solid #b4b4b4;
  background: #fff;
}
.tree {
  flex: 1;
  min-width: 0;
  height: 300px;
  margin: 0;
  padding: 0 10px 0 0;
  list-style: none;
  overflow: hidden;
}
.tree li {
  position: relative;
  height: 19px;
  display: flex;
  align-items: center;
  white-space: nowrap;
}
.tree .arrow { flex: none; width: 5px; height: 8px; margin: 0 6px 0 4px; fill: #555; }
.tree .arrow.open { width: 8px; height: 5px; margin: 0 5px 0 2px; }
.tree .ico { flex: none; width: 16px; height: 16px; margin: 0 6px 0 4px; }
.tree .d0 { padding-left: 64px; }
.tree .d1 { padding-left: 84px; }
.tree .d2 { padding-left: 104px; }
.tree .d3 { padding-left: 124px; }
.tree .d4 { padding-left: 144px; }
.tree .d5 { padding-left: 164px; }
.tree .selected { background: #0078d7; color: #fff; }
.highlight {
  position: absolute;
  left: 170px;
  top: -1px;
  width: 227px;
  height: 23px;
  z-index: 1;
  border: 3px solid #ee1c25;
  background: rgba(255, 255, 255, .08);
}

.scrollbar { width: 14px; display: flex; flex-direction: column; border-left: 1px solid #b4b4b4; }
.scrollbar button { height: 14px; background: #fafafa; }
.scrollbar svg { width: 8px; height: 5px; fill: #555; }
.track { flex: 1; padding-top: 53px; background: #e4e4e4; border: 1px solid #b4b4b4; border-width: 1px 0; }
.thumb { display: block; height: 39px; background: #fbfbfb; border: 1px solid #b4b4b4; border-width: 1px 0; }
.splitter { flex: none; height: 5px; width: 17px; margin: 0 auto; border-bottom: 1px dotted #aaa; }

.layer-box { flex: 1; border: 1px solid #b4b4b4; background: #fff; }
.layer-row {
  height: 19px;
  display: flex;
  align-items: center;
  padding-left: 23px;
  background: linear-gradient(#e2e2e2, #e2e2e2) right / 10px 100% no-repeat #f0f0f0;
}
.layer-row label {
  font-weight: 700;
  text-decoration: underline 1px;
  text-underline-offset: 4px;
  text-decoration-skip-ink: none;
}
.symbol { width: 7px; height: 7px; margin: 0 11px 0 10px; border: 1px solid #555; border-radius: 50%; background: #7d4e70; }

input[type="checkbox"] {
  appearance: none;
  flex: none;
  width: 14px;
  height: 14px;
  margin: 0;
  border: 1px solid #aaa;
  background: #fff;
}
input[type="checkbox"]:checked::after {
  content: "";
  display: block;
  width: 12px;
  height: 12px;
  background: #000;
  clip-path: polygon(15% 50%, 30% 45%, 45% 65%, 75% 10%, 90% 15%, 50% 95%, 40% 95%);
}

.map { min-width: 0; background: #fff; border: 1px solid #b4b4b4; border-right: 0; overflow: hidden; }
.map svg { display: block; width: 100%; height: 100%; }
.stations { fill: none; stroke: none; marker: url(#station); }

/* Status bar */
.statusbar {
  flex: none;
  position: relative;
  height: 28px;
  padding: 0 7px 2px 4px;
  display: flex;
  align-items: center;
  font: 11px/16px "Liberation Mono", "Noto Sans CJK SC", monospace;
}
.statusbar input, .statusbar select { font-family: inherit; color: inherit; outline: 0; }
.statusbar input[type="text"], .statusbar select { font-size: 10px; }
.locator, .coord, .combo, .spin {
  height: 22px;
  border: 1px solid #aaa;
  border-radius: 3px;
  background: #fff;
}
.locator { width: 200px; display: flex; align-items: center; padding-left: 8px; }
.locator svg { width: 13px; height: 13px; margin-right: 7px; }
.locator input[type="text"] { flex: 1; min-width: 0; padding: 0; border: 0; background: none; font-size: 11px; }
.locator input::placeholder { color: #777; opacity: 1; }
.ready { margin-left: 8px; }
.status-right { margin-left: auto; display: flex; align-items: center; }
.field { display: flex; align-items: center; gap: 3px; }
.field label { white-space: nowrap; }
.coord { width: 117px; padding: 0 6px; }
.extents svg { width: 18px; height: 18px; margin: 0 12px 0 4px; }
.combo { position: relative; width: 82px; }
.combo select { appearance: none; width: 100%; height: 20px; padding: 0 3px; border: 0; background: linear-gradient(#aaa, #aaa) 61px 0 / 1px 100% no-repeat; }
.combo svg { position: absolute; right: 7px; top: 8px; width: 8px; height: 5px; fill: #555; pointer-events: none; }
.lock svg { width: 14px; height: 16px; margin: 0 7px 0 12px; }
.spin { width: 92px; display: flex; }
.spin input { flex: 1; min-width: 0; padding: 0 4px; border: 0; background: none; }
.steps { width: 14px; display: flex; flex-direction: column; justify-content: center; gap: 3px; border-left: 1px solid #aaa; }
.steps svg { width: 8px; height: 5px; fill: #555; }
.rotation { margin: 0 7px 0 10px; gap: 9px; }
.rotation .spin { width: 88px; }
.render { gap: 6px; }
.crs { margin: 0 25px 0 18px; gap: 5px; font-size: 10px; }
.crs svg { width: 14px; height: 14px; }
.messages svg { width: 16px; height: 16px; }
.watermark {
  position: absolute;
  right: 12px;
  top: 0;
  font: 16px/20px "Liberation Sans", sans-serif;
  color: rgba(255, 255, 255, .7);
  text-shadow: 1px 1px 1px rgba(0, 0, 0, .2);
  pointer-events: none;
}
```
